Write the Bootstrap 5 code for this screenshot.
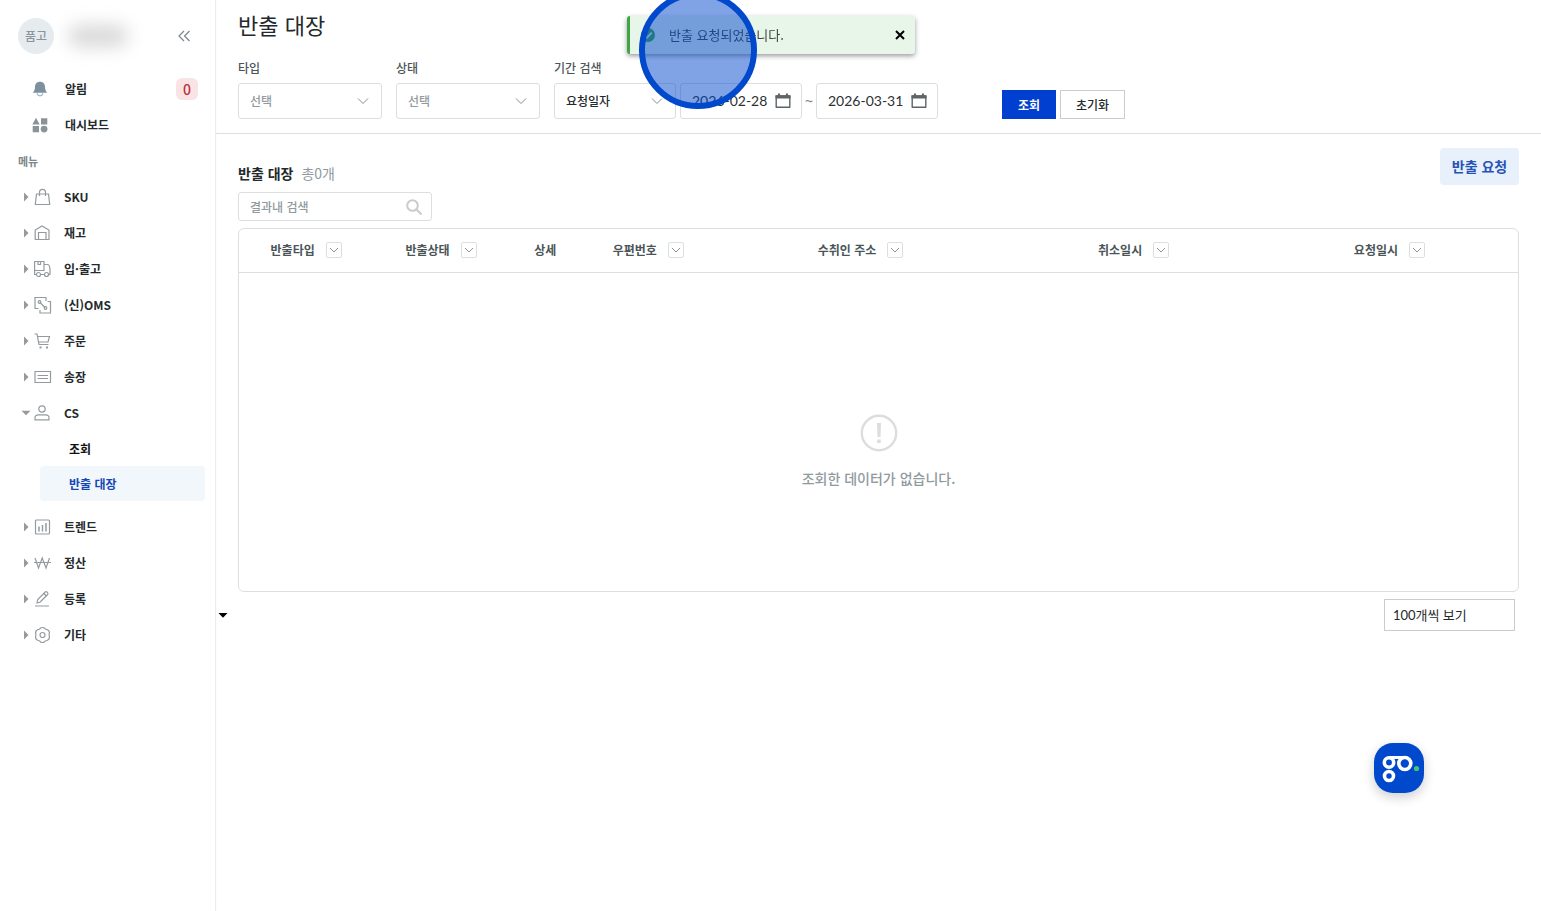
<!DOCTYPE html>
<html lang="ko">
<head>
<meta charset="utf-8">
<meta name="viewport" content="width=device-width, initial-scale=1">
<title>반출 대장</title>
<link href="https://cdn.jsdelivr.net/npm/bootstrap@5.3.0/dist/css/bootstrap.min.css" rel="stylesheet">
<style>
  :root { --ink:#24292c; --soft:#4b5558; --mute:#8f9a9e; --line:#dcdfe0; --brand:#003fcf; }
  body { font-family:"Noto Sans CJK KR","Noto Sans",sans-serif; font-size:12px; line-height:18px; color:var(--ink); background:#fff; }
  h1,h2,p { margin:0; }
  a { color:inherit; text-decoration:none; }
  .side { width:216px; border-right:1px solid #eceeee; padding:18px 10px 18px 18px; box-shadow:0 0 4px rgba(0,0,0,.03); }
  .profile { margin-bottom:17px; }
  .avatar { width:36px; height:36px; background:#e6ebf0; color:#8a949b; font-weight:500; }
  .masked { width:60px; height:22px; margin-left:14px; background:#d8d8d8; border-radius:12px; filter:blur(9px); }
  .fold { width:14px; height:14px; color:#7c868a; }
  .fold-btn { margin-right:14px; }
  .side-row { height:36px; font-weight:700; }
  .side-row svg { color:#939b9e; flex:none; }
  .top-row { padding-left:14px; gap:17px; }
  .top-row svg { width:16px; height:16px; }
  .count { width:22px; height:22px; margin-right:7px; border-radius:6px; background:#f9e3e4; color:#b8343f; font-size:14px; font-weight:500; line-height:22px; }
  .menu-title { height:36px; line-height:36px; font-size:11px; color:#7d888c; font-weight:700; }
  .tree-row { padding-left:5px; }
  .tree-row .arrow { width:6px; height:10px; }
  .tree-row.open .arrow { width:10px; height:6px; margin-left:-2px; margin-right:-2px; }
  .tree-row .pic { width:18px; height:18px; margin:0 12px 0 5px; }
  .sub-row { height:36px; line-height:35px; margin:0 0 0 22px; padding-left:29px; font-weight:700; color:#111; border-radius:4px; }
  .sub-row.active { height:35px; background:#f2f7fc; color:#1546b5; margin-bottom:8px; margin-top:-1px; }
  .page-title { font-weight:400; font-size:22px; line-height:28px; margin-bottom:21px; }
  .filters { padding:10px 22px 14px; border-bottom:1px solid var(--line); }
  .filters label { display:block; font-weight:500; color:var(--soft); margin-bottom:6px; }
  .field { margin-right:14px; }
  .box { height:36px; border:1px solid var(--line); border-radius:3px; font-size:12px; padding:0 10px 0 11px; color:var(--ink); background-color:#fff; }
  .form-select.box { font-weight:500; background-image:url("data:image/svg+xml,%3Csvg xmlns='http://www.w3.org/2000/svg' viewBox='0 0 12 12' fill='none' stroke='%23858f92'%3E%3Cpath d='M1 3.5l5 5 5-5'/%3E%3C/svg%3E"); background-size:12px; background-position:right 12px center; }
  .form-select.unset { color:var(--mute); }
  .w-wide { width:144px; }
  .w-date { width:122px; }
  .tilde { width:14px; line-height:36px; text-align:center; color:#7c868a; font-family:"Noto Sans",sans-serif; font-size:14px; }
  .box input { border:0; outline:0; padding:0; width:80px; font-family:Lato,sans-serif; font-size:14px; color:#2c3134; background:transparent; }
  .box svg { width:16px; height:16px; flex:none; color:#5f6567; }
  .act { height:29px; border-radius:0; padding:0; font-size:12px; line-height:18px; font-weight:500; }
  .act-go { width:54px; background:var(--brand); border-color:var(--brand); color:#fff; font-weight:700; }
  .act-reset { width:65px; border:1px solid #c9cdce; background:#fff; color:var(--ink); }
  .filters .actions { margin-left:64px; }
  .results { padding:14px 22px 7px; }
  .results h2 { font-size:14px; line-height:20px; font-weight:700; }
  .total { font-size:14px; line-height:20px; color:var(--mute); }
  .ask { width:79px; height:37px; border-radius:4px; background:#e8f0fc; color:#2554b4; font-size:14px; font-weight:700; padding:0; }
  .head-line { padding-top:15px; }
  .box.find { width:194px; height:29px; margin:9px 0 7px; padding-right:9px; }
  .box.find input { font-family:inherit; font-size:12px; width:150px; font-weight:500; }
  .box.find input::placeholder { color:var(--mute); opacity:1; }
  .box.find svg { color:#c9cccd; }
  .sheet { border:1px solid var(--line); border-radius:6px; }
  .sheet table { table-layout:fixed; }
  .sheet th { height:43px; padding:0; text-align:center; vertical-align:middle; font-weight:700; color:var(--soft); border-bottom:1px solid var(--line); white-space:nowrap; }
  .sheet td { height:319px; padding:38px 0 0; text-align:center; vertical-align:middle; border:0; color:var(--mute); font-size:14px; font-weight:500; }
  .th-in { gap:11px; }
  .drop { width:16px; height:16px; border:1px solid var(--line); border-radius:2px; background:#fff; padding:0; color:#8c9597; }
  .drop svg { width:10px; height:10px; }
  .empty svg { width:38px; height:38px; display:block; margin:0 auto 17px; }
  .foot { padding:0 26px 20px 2px; }
  .caret { width:10px; height:5px; }
  .per-page { appearance:none; width:131px; height:32px; border:1px solid #c9cdce; border-radius:0; background:#fff; padding:0 8px; font-family:Lato,"Noto Sans CJK KR",sans-serif; font-size:13px; color:var(--ink); }
  .note { left:627px; top:16px; width:288px; height:38px; background:#e8f5e9; border-left:3px solid #3fa648; border-radius:3px; box-shadow:0 2px 5px rgba(0,0,0,.4); padding:0 10px; color:#3c4741; font-size:13px; z-index:20; }
  .note .ok { width:16px; height:16px; margin-right:13px; flex:none; }
  .note button { width:10px; height:10px; padding:0; border:0; background:none; }
  .ring { left:639px; top:-9px; width:118px; height:118px; border:6px solid #0048cc; border-radius:50%; background:rgba(0,72,204,.5); z-index:30; pointer-events:none; }
  .chat { right:117px; bottom:118px; width:50px; height:50px; border:0; border-radius:19px; background:#0049cc; padding:0; box-shadow:0 4px 12px rgba(0,0,0,.2); z-index:10; }
</style>
</head>
<body>
<svg width="0" height="0" class="position-absolute" aria-hidden="true">
  <symbol id="right" viewBox="0 0 6 10"><path d="M1 .5L5.500 5 1 9.500z" fill="currentColor"/></symbol>
  <symbol id="down" viewBox="0 0 10 6"><path d="M.5 .8h9L5 5.300z" fill="currentColor"/></symbol>
  <symbol id="chev" viewBox="0 0 10 10"><path d="M1 3l4 4 4-4" fill="none" stroke="currentColor"/></symbol>
  <symbol id="cal" viewBox="0 0 16 16"><path d="M1.200 3h13.600v11.300H1.200z" fill="none" stroke="currentColor" stroke-width="1.400" stroke-linejoin="round"/><path d="M.5 2.300h15V5.500H.5zM3 .5h2V3H3zM11 .5h2V3h-2z" fill="currentColor"/></symbol>
</svg>

<div class="d-flex min-vh-100">
  <aside class="side flex-shrink-0">
    <div class="profile d-flex align-items-center">
      <div class="avatar rounded-circle d-flex align-items-center justify-content-center">품고</div>
      <div class="masked"></div>
      <button class="btn fold-btn p-0 border-0 ms-auto d-flex" aria-label="메뉴 접기"><svg class="fold" viewBox="0 0 14 14" fill="none" stroke="currentColor" stroke-width="1.200"><path d="M7 2L2 7l5 5M12.500 2l-5 5 5 5"/></svg></button>
    </div>
    <nav>
      <a href="#" class="side-row top-row d-flex align-items-center">
        <svg viewBox="0 0 16 16"><path d="M8 .8c-3.200 0-5 2.200-5 5 0 3-.8 4.500-2.200 5.900h14.400C13.800 10.300 13 8.800 13 5.800c0-2.800-1.800-5-5-5z" fill="#7d909d"/><path d="M5.300 12.300c.3 3.300 5.100 3.300 5.400 0" fill="none" stroke="#9db2c0" stroke-width="1.200"/></svg>
        <span>알림</span><span class="count ms-auto text-center">0</span>
      </a>
      <a href="#" class="side-row top-row d-flex align-items-center">
        <svg viewBox="0 0 16 16" fill="#8a9498"><path d="M4 .8l3.700 6.700H.3zM9 1.200h6.300v6.300H9zM.7 9H7v6.300H.7z"/><circle cx="12.100" cy="12.100" r="3.400"/></svg>
        <span>대시보드</span>
      </a>
      <div class="menu-title">메뉴</div>
      <a href="#" class="side-row tree-row d-flex align-items-center"><svg class="arrow"><use href="#right"/></svg>
        <svg class="pic" viewBox="0 0 18 18" fill="none" stroke="currentColor" stroke-width="1.200"><path d="M2.500 6h12l1.200 10.500H1.300zM5.500 8V4.500c0-4.200 6-4.200 6 0V8"/></svg>SKU</a>
      <a href="#" class="side-row tree-row d-flex align-items-center"><svg class="arrow"><use href="#right"/></svg>
        <svg class="pic" viewBox="0 0 18 18" fill="none" stroke="currentColor" stroke-width="1.200"><path d="M4.500 15.500H1.200V6L8 2l7 4v9.500h-3M4.500 15.500v-7h7.500v7M4.500 15.500H12"/></svg>재고</a>
      <a href="#" class="side-row tree-row d-flex align-items-center"><svg class="arrow"><use href="#right"/></svg>
        <svg class="pic" viewBox="0 0 18 18" fill="none" stroke="currentColor" stroke-width="1.200"><path d="M2.300 14.500H.6v-13H10v9H.6M4 1.500V4.500h2.500v-3M10 4.500h3c2 0 3 2.500 3 5v5h-1.300M6.700 14.500h3.600"/><circle cx="4.500" cy="14.500" r="2"/><circle cx="12.500" cy="14.500" r="2"/></svg>입·출고</a>
      <a href="#" class="side-row tree-row d-flex align-items-center"><svg class="arrow"><use href="#right"/></svg>
        <svg class="pic" viewBox="0 0 18 18" fill="none" stroke="currentColor" stroke-width="1.200"><path d="M4.500 12.500H1v-11h11V5M13.500 5.500h3v11.500H6V14M6 6.500l5 5"/><circle cx="5.500" cy="6" r="1.300"/><circle cx="11.500" cy="12" r="1.300"/></svg>(신)OMS</a>
      <a href="#" class="side-row tree-row d-flex align-items-center"><svg class="arrow"><use href="#right"/></svg>
        <svg class="pic" viewBox="0 0 18 18" fill="none" stroke="currentColor" stroke-width="1.200"><path d="M.5 2H3l2 10.500h9.500M3.500 4.500h12L14 10H4.500"/><path d="M5.500 14.500h2v2h-2zM12 14.500h2v2h-2z" fill="currentColor" stroke="none"/></svg>주문</a>
      <a href="#" class="side-row tree-row d-flex align-items-center"><svg class="arrow"><use href="#right"/></svg>
        <svg class="pic" viewBox="0 0 18 18" fill="none" stroke="currentColor" stroke-width="1.200"><path d="M1 3.500h15.500v11H1zM3.500 7.500h10.500M3.500 10.500h10.500"/></svg>송장</a>
      <a href="#" class="side-row tree-row open d-flex align-items-center"><svg class="arrow"><use href="#down"/></svg>
        <svg class="pic" viewBox="0 0 18 18" fill="none" stroke="currentColor" stroke-width="1.200"><circle cx="8" cy="5" r="3.200"/><path d="M1 15.800v-2c0-2 1.500-3 3.500-3h7c2 0 3.500 1 3.500 3v2z"/></svg>CS</a>
      <a href="#" class="sub-row d-block">조회</a>
      <a href="#" class="sub-row active d-block" aria-current="page">반출 대장</a>
      <a href="#" class="side-row tree-row d-flex align-items-center"><svg class="arrow"><use href="#right"/></svg>
        <svg class="pic" viewBox="0 0 18 18" fill="none" stroke="currentColor" stroke-width="1.200"><rect x="1.500" y="2" width="14" height="14" rx="1"/><path d="M5 8.500v5M8.500 7v6.500M12 5v8.500" stroke-width="1.500"/></svg>트렌드</a>
      <a href="#" class="side-row tree-row d-flex align-items-center"><svg class="arrow"><use href="#right"/></svg>
        <svg class="pic" viewBox="0 0 18 18" fill="none" stroke="currentColor" stroke-width="1.200"><path d="M1 4l3.500 10 3.700-10 3.800 10 3.500-10M0 8.500h17"/></svg>정산</a>
      <a href="#" class="side-row tree-row d-flex align-items-center"><svg class="arrow"><use href="#right"/></svg>
        <svg class="pic" viewBox="0 0 18 18" fill="none" stroke="currentColor" stroke-width="1.200"><path d="M3 13l.7-3.500 7.500-7.500c1.500-1 3.500 1 2.500 2.500l-7.500 7.500zM9.800 3.500l2.500 2.500M1 16h14"/></svg>등록</a>
      <a href="#" class="side-row tree-row d-flex align-items-center"><svg class="arrow"><use href="#right"/></svg>
        <svg class="pic" viewBox="0 0 18 18" fill="none" stroke="currentColor" stroke-width="1.200" stroke-linejoin="round"><path d="M6.300 2.300q2.200-1.600 4.400 0 .8 1.200 2.300 1.200 2.500 1 2.500 3.500-.8 2 0 4 0 2.500-2.500 3.500-1.500 0-2.300 1.200-2.200 1.600-4.400 0-.8-1.200-2.300-1.200-2.500-1-2.500-3.500.8-2 0-4 0-2.500 2.500-3.500 1.500 0 2.300-1.200z"/><circle cx="8.500" cy="9" r="2.500"/></svg>기타</a>
    </nav>
  </aside>

  <main class="flex-grow-1">
    <form class="filters">
      <h1 class="page-title">반출 대장</h1>
      <div class="d-flex align-items-end">
        <div class="field"><label for="kind">타입</label><select id="kind" class="form-select box unset w-wide"><option>선택</option></select></div>
        <div class="field"><label for="state">상태</label><select id="state" class="form-select box unset w-wide"><option>선택</option></select></div>
        <div class="me-1"><label for="basis">기간 검색</label><select id="basis" class="form-select box w-date"><option>요청일자</option></select></div>
        <div class="box w-date d-flex align-items-center justify-content-between"><input type="text" value="2026-02-28" aria-label="시작일"><svg><use href="#cal"/></svg></div>
        <span class="tilde">~</span>
        <div class="box w-date d-flex align-items-center justify-content-between"><input type="text" value="2026-03-31" aria-label="종료일"><svg><use href="#cal"/></svg></div>
        <div class="actions d-flex gap-1">
          <button type="button" class="btn act act-go">조회</button>
          <button type="button" class="btn act act-reset">초기화</button>
        </div>
      </div>
    </form>

    <section class="results">
      <div class="d-flex justify-content-between align-items-start">
        <div>
          <div class="head-line d-flex gap-2"><h2>반출 대장</h2><span class="total">총0개</span></div>
          <div class="box find d-flex align-items-center justify-content-between"><input type="text" placeholder="결과내 검색" aria-label="결과내 검색"><svg viewBox="0 0 16 16" fill="none" stroke="currentColor" stroke-width="2"><circle cx="6.500" cy="6.500" r="5.300"/><path d="M10.500 10.500l5 5"/></svg></div>
        </div>
        <button type="button" class="btn ask border-0">반출 요청</button>
      </div>
      <div class="sheet">
        <table class="table mb-0">
          <colgroup><col style="width:10.5%"><col style="width:10.6%"><col style="width:5.7%"><col style="width:10.4%"><col style="width:22.8%"><col style="width:19.9%"><col style="width:20.1%"></colgroup>
          <thead><tr>
            <th scope="col"><div class="th-in d-flex align-items-center justify-content-center">반출타입<button type="button" class="drop d-flex align-items-center justify-content-center" aria-label="반출타입 필터"><svg><use href="#chev"/></svg></button></div></th>
            <th scope="col"><div class="th-in d-flex align-items-center justify-content-center">반출상태<button type="button" class="drop d-flex align-items-center justify-content-center" aria-label="반출상태 필터"><svg><use href="#chev"/></svg></button></div></th>
            <th scope="col">상세</th>
            <th scope="col"><div class="th-in d-flex align-items-center justify-content-center">우편번호<button type="button" class="drop d-flex align-items-center justify-content-center" aria-label="우편번호 필터"><svg><use href="#chev"/></svg></button></div></th>
            <th scope="col"><div class="th-in d-flex align-items-center justify-content-center">수취인 주소<button type="button" class="drop d-flex align-items-center justify-content-center" aria-label="수취인 주소 필터"><svg><use href="#chev"/></svg></button></div></th>
            <th scope="col"><div class="th-in d-flex align-items-center justify-content-center">취소일시<button type="button" class="drop d-flex align-items-center justify-content-center" aria-label="취소일시 필터"><svg><use href="#chev"/></svg></button></div></th>
            <th scope="col"><div class="th-in d-flex align-items-center justify-content-center">요청일시<button type="button" class="drop d-flex align-items-center justify-content-center" aria-label="요청일시 필터"><svg><use href="#chev"/></svg></button></div></th>
          </tr></thead>
          <tbody><tr><td colspan="7" class="empty">
            <svg viewBox="0 0 38 38"><circle cx="19" cy="19" r="17.200" fill="none" stroke="#dcdede" stroke-width="2.400"/><path d="M17 9h4l-.5 14h-3zM17.200 25.500h3.600v3.600h-3.600z" fill="#dcdede"/></svg>
            조회한 데이터가 없습니다.
          </td></tr></tbody>
        </table>
      </div>
    </section>
    <div class="foot d-flex justify-content-between align-items-center">
      <svg class="caret" viewBox="0 0 10 5"><path d="M.5 0h9L5 4.800z" fill="#000"/></svg>
      <select class="per-page" aria-label="페이지당 개수"><option>100개씩 보기</option></select>
    </div>
  </main>
</div>

<div class="note position-fixed d-flex align-items-center" role="alert">
  <svg class="ok" viewBox="0 0 16 16"><circle cx="8" cy="8" r="7" fill="#3fa648"/><path d="M4.500 8.200l2.500 2.500 4.700-5" fill="none" stroke="#e8f5e9" stroke-width="1.800"/></svg>
  <span>반출 요청되었습니다.</span>
  <button type="button" class="ms-auto d-flex" aria-label="닫기"><svg viewBox="0 0 10 10" width="10" height="10"><path d="M1 1l8 8M9 1l-8 8" stroke="#000" stroke-width="2"/></svg></button>
</div>
<div class="ring position-fixed"></div>
<button type="button" class="chat position-fixed" aria-label="상담">
  <svg viewBox="0 0 50 50" width="50" height="50" fill="none" stroke="#fff" stroke-width="3.600"><circle cx="15" cy="19.500" r="4.700"/><circle cx="15" cy="33" r="4.500"/><circle cx="30.800" cy="20.500" r="6"/><path d="M15 14.500h15" stroke-width="3"/><circle cx="42.500" cy="25.500" r="2.600" fill="#43c678" stroke="none"/></svg>
</button>
<script src="https://cdn.jsdelivr.net/npm/bootstrap@5.3.0/dist/js/bootstrap.bundle.min.js"></script>
</body>
</html>
